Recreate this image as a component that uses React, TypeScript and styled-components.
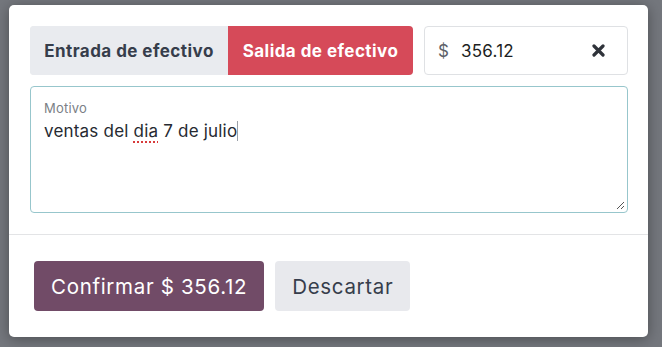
import styled, { createGlobalStyle } from "styled-components";

const Global = createGlobalStyle`
  html, body {
    margin: 0;
    padding: 0;
    background: #74777d;
    font-family: Inter, "Noto Sans", "Liberation Sans", sans-serif;
  }
  * { box-sizing: border-box; }
`;

const Backdrop = styled.div`
  width: 662px;
  height: 347px;
  padding: 5px 14px 10px 9px;
  background: #74777d;
`;

const Modal = styled.div`
  width: 639px;
  height: 332px;
  background: #ffffff;
  border-radius: 5px;
  box-shadow: 0 2px 14px rgba(0, 0, 0, 0.35);
  display: flex;
  flex-direction: column;
`;

const Body = styled.div`
  padding: 21px 20px 21px 21px;
  display: flex;
  flex-direction: column;
  gap: 11px;
  border-bottom: 1px solid #e3e4e6;
`;

const TopRow = styled.div`
  display: flex;
  gap: 11px;
  height: 49px;
`;

const Toggle = styled.div`
  display: flex;
  width: 383px;
  border-radius: 4px;
  overflow: hidden;
  background: #e9ebef;
`;

const ToggleButton = styled.button<{ $active?: boolean }>`
  border: none;
  margin: 0;
  height: 100%;
  font-family: inherit;
  font-size: 17px;
  font-weight: 700;
  letter-spacing: 0.45px;
  padding: 0;
  flex: ${(p) => (p.$active ? "0 0 185px" : "1")};
  background: ${(p) => (p.$active ? "#d64a59" : "#e9ebef")};
  color: ${(p) => (p.$active ? "#ffffff" : "#363d4b")};
`;

const Amount = styled.div`
  flex: 1;
  display: flex;
  align-items: center;
  border: 1px solid #dfe1e4;
  border-radius: 4px;
  padding: 0 22px 0 13px;
  font-size: 17px;
  letter-spacing: 0.2px;
`;

const Currency = styled.span`
  color: #5d6169;
  margin-right: 12px;
`;

const Value = styled.span`
  flex: 1;
  color: #1d1f23;
`;

const Field = styled.div`
  position: relative;
  height: 127px;
  border: 1px solid #97c6cc;
  border-radius: 4px;
  padding: 12px 13px 0 13px;
`;

const Label = styled.div`
  font-size: 13px;
  color: #7b7f86;
  line-height: 18px;
  letter-spacing: 0.2px;
`;

const Text = styled.div`
  font-size: 17px;
  color: #262a31;
  line-height: 26px;
  margin-top: 1px;
  letter-spacing: 0.2px;
`;

const Misspelled = styled.span`
  text-decoration: underline dotted #d83b3b;
  text-underline-offset: 4px;
  text-decoration-thickness: 1.5px;
`;

const Caret = styled.span`
  display: inline-block;
  width: 1px;
  height: 20px;
  background: #9aa0a8;
  vertical-align: -4px;
`;

const Grip = styled.svg`
  position: absolute;
  right: 2px;
  bottom: 2px;
`;

const Footer = styled.div`
  padding: 26px 25px;
  display: flex;
  gap: 11px;
`;

const Button = styled.button<{ $primary?: boolean }>`
  height: 50px;
  border: none;
  border-radius: 4px;
  font-family: inherit;
  font-size: 20.5px;
  letter-spacing: 0.68px;
  padding: 0 17px;
  background: ${(p) => (p.$primary ? "#714b67" : "#e8e9ed")};
  color: ${(p) => (p.$primary ? "#ffffff" : "#363d4b")};
`;

export default function App() {
  return (
    <>
      <Global />
      <Backdrop>
        <Modal>
          <Body>
            <TopRow>
              <Toggle>
                <ToggleButton>Entrada de efectivo</ToggleButton>
                <ToggleButton $active>Salida de efectivo</ToggleButton>
              </Toggle>
              <Amount>
                <Currency>$</Currency>
                <Value>356.12</Value>
                <svg width="13" height="13" viewBox="0 0 13 13">
                  <path
                    d="M2 2 L11 11 M11 2 L2 11"
                    stroke="#2f333a"
                    strokeWidth="3.2"
                    strokeLinecap="round"
                  />
                </svg>
              </Amount>
            </TopRow>
            <Field>
              <Label>Motivo</Label>
              <Text>
                ventas del <Misspelled>dia</Misspelled> 7 de julio
                <Caret />
              </Text>
              <Grip width="9" height="9" viewBox="0 0 9 9">
                <path d="M8 1 L1 8 M8 5 L5 8" stroke="#555" strokeWidth="1" />
              </Grip>
            </Field>
          </Body>
          <Footer>
            <Button $primary>Confirmar $ 356.12</Button>
            <Button>Descartar</Button>
          </Footer>
        </Modal>
      </Backdrop>
    </>
  );
}
